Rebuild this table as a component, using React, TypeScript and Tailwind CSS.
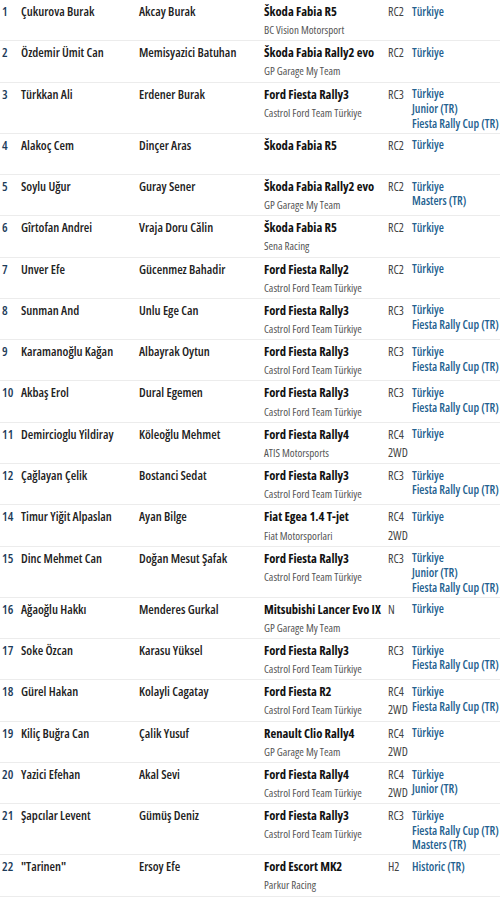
type Entry = {
  no: number;
  driver: string;
  codriver: string;
  car: string;
  team?: string;
  cls: string[];
  cats: string[];
};

const castrol = "Castrol Ford Team Türkiye";
const gp = "GP Garage My Team";
const cup = "Fiesta Rally Cup (TR)";

const entries: Entry[] = [
  { no: 1, driver: "Çukurova Burak", codriver: "Akcay Burak", car: "Škoda Fabia R5", team: "BC Vision Motorsport", cls: ["RC2"], cats: ["Türkiye"] },
  { no: 2, driver: "Özdemir Ümit Can", codriver: "Memisyazici Batuhan", car: "Škoda Fabia Rally2 evo", team: gp, cls: ["RC2"], cats: ["Türkiye"] },
  { no: 3, driver: "Türkkan Ali", codriver: "Erdener Burak", car: "Ford Fiesta Rally3", team: castrol, cls: ["RC3"], cats: ["Türkiye", "Junior (TR)", cup] },
  { no: 4, driver: "Alakoç Cem", codriver: "Dinçer Aras", car: "Škoda Fabia R5", cls: ["RC2"], cats: ["Türkiye"] },
  { no: 5, driver: "Soylu Uğur", codriver: "Guray Sener", car: "Škoda Fabia Rally2 evo", team: gp, cls: ["RC2"], cats: ["Türkiye", "Masters (TR)"] },
  { no: 6, driver: "Gîrtofan Andrei", codriver: "Vraja Doru Călin", car: "Škoda Fabia R5", team: "Sena Racing", cls: ["RC2"], cats: ["Türkiye"] },
  { no: 7, driver: "Unver Efe", codriver: "Gücenmez Bahadir", car: "Ford Fiesta Rally2", team: castrol, cls: ["RC2"], cats: ["Türkiye"] },
  { no: 8, driver: "Sunman And", codriver: "Unlu Ege Can", car: "Ford Fiesta Rally3", team: castrol, cls: ["RC3"], cats: ["Türkiye", cup] },
  { no: 9, driver: "Karamanoğlu Kağan", codriver: "Albayrak Oytun", car: "Ford Fiesta Rally3", team: castrol, cls: ["RC3"], cats: ["Türkiye", cup] },
  { no: 10, driver: "Akbaş Erol", codriver: "Dural Egemen", car: "Ford Fiesta Rally3", team: castrol, cls: ["RC3"], cats: ["Türkiye", cup] },
  { no: 11, driver: "Demircioglu Yildiray", codriver: "Köleoğlu Mehmet", car: "Ford Fiesta Rally4", team: "ATIS Motorsports", cls: ["RC4", "2WD"], cats: ["Türkiye"] },
  { no: 12, driver: "Çağlayan Çelik", codriver: "Bostanci Sedat", car: "Ford Fiesta Rally3", team: castrol, cls: ["RC3"], cats: ["Türkiye", cup] },
  { no: 14, driver: "Timur Yiğit Alpaslan", codriver: "Ayan Bilge", car: "Fiat Egea 1.4 T-jet", team: "Fiat Motorsporlari", cls: ["RC4", "2WD"], cats: ["Türkiye"] },
  { no: 15, driver: "Dinc Mehmet Can", codriver: "Doğan Mesut Şafak", car: "Ford Fiesta Rally3", team: castrol, cls: ["RC3"], cats: ["Türkiye", "Junior (TR)", cup] },
  { no: 16, driver: "Ağaoğlu Hakkı", codriver: "Menderes Gurkal", car: "Mitsubishi Lancer Evo IX", team: gp, cls: ["N"], cats: ["Türkiye"] },
  { no: 17, driver: "Soke Özcan", codriver: "Karasu Yüksel", car: "Ford Fiesta Rally3", team: castrol, cls: ["RC3"], cats: ["Türkiye", cup] },
  { no: 18, driver: "Gürel Hakan", codriver: "Kolayli Cagatay", car: "Ford Fiesta R2", team: castrol, cls: ["RC4", "2WD"], cats: ["Türkiye", cup] },
  { no: 19, driver: "Kiliç Buğra Can", codriver: "Çalik Yusuf", car: "Renault Clio Rally4", team: gp, cls: ["RC4", "2WD"], cats: ["Türkiye"] },
  { no: 20, driver: "Yazici Efehan", codriver: "Akal Sevi", car: "Ford Fiesta Rally4", team: castrol, cls: ["RC4", "2WD"], cats: ["Türkiye", "Junior (TR)"] },
  { no: 21, driver: "Şapcılar Levent", codriver: "Gümüş Deniz", car: "Ford Fiesta Rally3", team: castrol, cls: ["RC3"], cats: ["Türkiye", cup, "Masters (TR)"] },
  { no: 22, driver: '"Tarinen"', codriver: "Ersoy Efe", car: "Ford Escort MK2", team: "Parkur Racing", cls: ["H2"], cats: ["Historic (TR)"] },
];

function Row({ e }: { e: Entry }) {
  return (
    <div className="grid min-h-[41.3px] grid-cols-[21px_118px_125px_124px_24px_1fr] border-b border-[#ececec] pt-[3px] pb-[1px]">
      <div className="pl-[2px] text-[12.6px] font-semibold leading-[18.15px] text-[#1d3c5a]">{e.no}</div>
      <div className="whitespace-nowrap text-[12.6px] font-semibold leading-[18.15px] text-[#222]">{e.driver}</div>
      <div className="whitespace-nowrap text-[12.6px] font-semibold leading-[18.15px] text-[#222]">{e.codriver}</div>
      <div className="flex flex-col whitespace-nowrap">
        <span className="text-[12.6px] font-bold leading-[18.15px] text-[#111]">{e.car}</span>
        {e.team && <span className="text-[11px] leading-[18.15px] text-[#555]">{e.team}</span>}
      </div>
      <div className="flex flex-col text-[12px] leading-[18.15px] text-[#444]">
        {e.cls.map((c) => (
          <span key={c}>{c}</span>
        ))}
      </div>
      <div className="flex flex-col whitespace-nowrap pt-[0.6px] pb-[1px] text-[11.8px] font-semibold leading-[14.8px] text-[#24618f]">
        {e.cats.map((c) => (
          <span key={c}>{c}</span>
        ))}
      </div>
    </div>
  );
}

export default function App() {
  return (
    <div
      className="w-[500px] bg-white font-stretch-condensed"
      style={{ fontFamily: '"Open Sans", "Noto Sans", sans-serif' }}
    >
      {entries.map((e) => (
        <Row key={e.no} e={e} />
      ))}
    </div>
  );
}
